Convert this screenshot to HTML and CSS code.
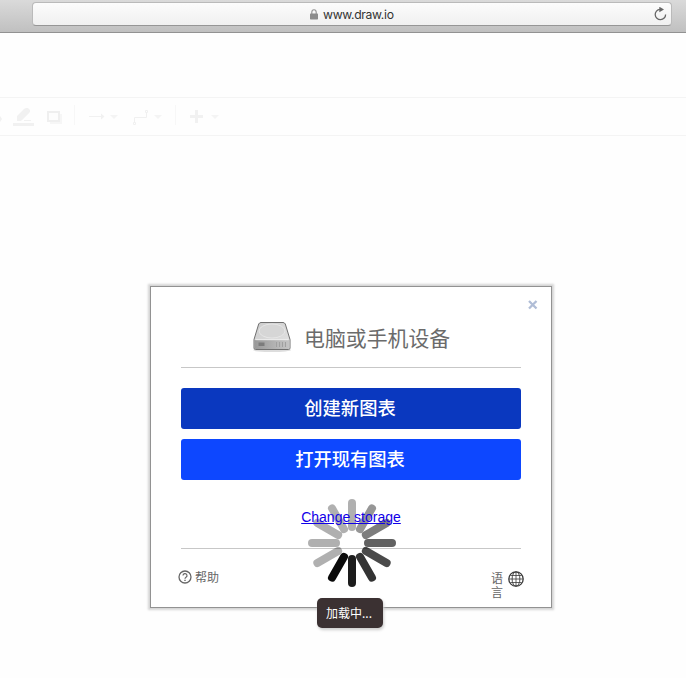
FILE: index.html
```html
<!DOCTYPE html>
<html lang="zh-CN">
<head>
<meta charset="utf-8">
<title>draw.io</title>
<link rel="stylesheet" href="styles.css">
</head>
<body>
<header class="browser">
  <div class="address">
    <span class="site"><svg class="lock" width="8" height="11" viewBox="0 0 8 11"><path d="M1.8 5V3.2a2.2 2.5 0 0 1 4.4 0V5" fill="none" stroke="#929292" stroke-width="1.1"/><rect y="4.6" width="8" height="5.8" rx=".7" fill="#8b8b8b"/></svg><span class="url">www.draw.io</span></span>
    <svg class="reload" width="14" height="14" viewBox="0 0 14 14"><path d="M7 2.300A5.200 5.200 0 1 0 12.600 7.400" fill="none" stroke="#666" stroke-width="1.300"/><path d="M6.300-.3l4.700 2.800-4.700 2.800z" fill="#666"/></svg>
  </div>
</header>
<nav class="toolbar">
  <svg width="230" height="37" viewBox="0 98 230 37">
    <g fill="#f1f1f1">
      <path d="M0 116l2 3-2 3zM17 120v-4l7-7 2-1h2l2 2v2l-9 9h-4zM13 123h21v3H13zM24 120h7v1h-7z"/>
      <path d="M50 114h12v10H50z" fill="#f6f6f6"/>
      <path d="M48 112h11v9H48z" fill="#fdfdfd" stroke="#efefef" stroke-width="2"/>
      <path d="M89 116h12v-2.500l3.500 3-3.500 3V117H89zM195 110h3v5h5v3h-5v5h-3v-5h-5v-3h5z"/>
      <path d="M110 115h8l-4 4zM154 115h8l-4 4zM211 115h8l-4 4z" fill="#f4f4f4"/>
      <path d="M74 105h1v20h-1zM175 105h1v20h-1z" fill="#f7f7f7"/>
    </g>
    <path d="M134.500 122v-4.500h12V113M133.500 122.500h2v2h-2zM145.500 110.500h2v2h-2z" fill="none" stroke="#f0f0f0"/>
  </svg>
</nav>
<main class="stage">
  <section class="dialog">
    <div class="close-row"><svg width="10" height="10" viewBox="0 0 10 10"><path d="M1 1l7.500 7.500M8.500 1L1 8.500" stroke="#b0bdd6" stroke-width="2.300"/></svg></div>
    <div class="title">
      <svg class="drive" width="40" height="32" viewBox="0 0 40 32">
        <defs><linearGradient id="top" x2="1" y2="1"><stop stop-color="#ccc"/><stop offset="1" stop-color="#e3e3e3"/></linearGradient><linearGradient id="front" x2="1"><stop stop-color="#999"/><stop offset="1" stop-color="#c5c5c5"/></linearGradient></defs>
        <ellipse cx="20" cy="29" rx="19" ry="2" fill="#ddd"/>
        <path d="M9 1.500h22q1.500 0 2.300 1.500l4.700 15.500v8.500q0 1.500-1.500 1.500h-33Q2 28.500 2 27v-8.500L6.700 3q.8-1.500 2.300-1.500z" fill="url(#top)" stroke="#707070"/>
        <path d="M2.500 19h35v8q0 1-1 1h-33q-1 0-1-1z" fill="url(#front)"/>
        <path d="M3.500 18.700h33" stroke="#eee"/>
        <ellipse cx="20" cy="10" rx="13" ry="7" fill="#d6d6d6" stroke="#e6e6e6"/>
        <path d="M6.500 21.500h6v3.500h-6z" fill="#7c7c7c"/><path d="M24.500 21v5M27.500 21v5M30.500 21v5M33.500 21v5" stroke="#a0a0a0"/>
      </svg>
      <span>电脑或手机设备</span>
    </div>
    <button class="btn create">创建新图表</button>
    <button class="btn open">打开现有图表</button>
    <a class="storage" href="#">Change storage</a>
    <footer class="footer">
      <div class="help"><svg width="14" height="14" viewBox="0 0 14 14"><circle cx="7" cy="7" r="6" fill="none" stroke="#666" stroke-width="1.300"/><path d="M5 5.600a2 2 0 1 1 3 1.700Q7 7.900 7 8.800" fill="none" stroke="#666" stroke-width="1.200"/><path d="M6.300 9.800h1.400v1.300H6.300z" fill="#666"/></svg><span>帮助</span></div>
      <div class="language"><span>语言</span><svg width="16" height="16" viewBox="0 0 16 16" fill="none" stroke="#3b3b3b"><circle cx="8" cy="8" r="7.200" stroke-width="1.300"/><path d="M8 1v14M1 8h14M2.300 4.500h11.400M2.300 11.500h11.400" stroke-width=".8"/><ellipse cx="8" cy="8" rx="3.900" ry="7.200" stroke-width=".9"/></svg></div>
    </footer>
    <svg class="spinner" width="88" height="88" viewBox="-44 -44 88 88">
      <defs><rect id="spoke" x="-4" y="-44" width="8" height="32" rx="4"/></defs>
      <use href="#spoke" opacity=".31"/>
      <use href="#spoke" transform="rotate(30)" opacity=".41"/>
      <use href="#spoke" transform="rotate(60)" opacity=".51"/>
      <use href="#spoke" transform="rotate(90)" opacity=".62"/>
      <use href="#spoke" transform="rotate(120)" opacity=".71"/>
      <use href="#spoke" transform="rotate(150)" opacity=".8"/>
      <use href="#spoke" transform="rotate(180)" opacity=".89"/>
      <use href="#spoke" transform="rotate(210)" opacity=".96"/>
      <use href="#spoke" transform="rotate(240)" opacity=".31"/>
      <use href="#spoke" transform="rotate(270)" opacity=".31"/>
      <use href="#spoke" transform="rotate(300)" opacity=".31"/>
      <use href="#spoke" transform="rotate(330)" opacity=".31"/>
    </svg>
    <div class="loading">加载中...</div>
  </section>
</main>
</body>
</html>
```
FILE: styles.css
```css
* { box-sizing: border-box; }
body {
  margin: 0;
  height: 678px;
  background: #fefefe;
  font-family: "Liberation Sans", "Noto Sans CJK SC", sans-serif;
  overflow: hidden;
}
svg { display: block; flex: none; }
.browser {
  height: 33px;
  padding: 2px 14px 0 32px;
  background: linear-gradient(#dadada, #c0c0c0);
  border-bottom: 1px solid #929292;
}
.address {
  height: 24px;
  display: flex;
  align-items: center;
  padding-right: 4px;
  border: 1px solid #bababa;
  border-bottom-color: #969696;
  border-radius: 4px;
  background: linear-gradient(#fcfcfc, #f0f0f0);
}
.site {
  flex: 1;
  display: flex;
  align-items: center;
  padding-left: 277px;
  gap: 5px;
}
.url {
  padding-top: 2px;
  font: 12.2px/20px Inter, sans-serif;
  letter-spacing: -.33px;
  color: #333;
}
.toolbar {
  margin-top: 64px;
  height: 39px;
  border: solid #f4f4f4;
  border-width: 1px 0;
}
.stage { padding: 150px 0 0 150px; }
.dialog {
  position: relative;
  width: 402px;
  height: 322px;
  padding: 0 30px;
  display: flex;
  flex-direction: column;
  background: #fff;
  border: 1px solid #929292;
  box-shadow: 0 0 2px 2px #d5d5d5;
}
.close-row {
  height: 33px;
  display: flex;
  justify-content: flex-end;
  padding-top: 13px;
  margin-right: -17px;
}
.title {
  height: 48px;
  display: flex;
  align-items: flex-start;
  padding-left: 71px;
  gap: 12px;
  border-bottom: 1px solid #c7c7c7;
  color: #6b6b6b;
  font-size: 20.9px;
  line-height: 38px;
  white-space: nowrap;
}
.drive { margin-top: 1px; }
.btn {
  height: 41px;
  margin: 20px 0 0;
  padding: 0 2px 2px 0;
  border: 0;
  border-radius: 3px;
  color: #fff;
  font: 500 18.3px/39px "Noto Sans CJK SC", sans-serif;
}
.create { background: #0a38bf; }
.open { margin-top: 10px; background: #0d47ff; }
.storage {
  align-self: center;
  margin-top: 28px;
  color: #1100e8;
  font-size: 14px;
  line-height: 18px;
  position: relative;
  z-index: 1;
}
.footer {
  margin: 22px -3px 0;
  padding-top: 22px;
  display: flex;
  justify-content: space-between;
  color: #666;
  font-size: 12px;
  line-height: 14px;
  position: relative;
}
.footer::before {
  content: "";
  position: absolute;
  top: 0;
  left: 3px;
  right: 3px;
  height: 1px;
  background: #c7c7c7;
}
.help { display: flex; align-items: flex-start; gap: 3px; }
.help span { padding-top: 1px; }
.language { display: flex; gap: 4px; padding-top: 1px; }
.language span { width: 13px; padding-top: 1px; }
.spinner { position: absolute; left: 157px; top: 212px; }
.loading {
  position: absolute;
  left: 166px;
  top: 311px;
  width: 66px;
  height: 30px;
  padding-left: 9px;
  border-radius: 5px;
  background: #3b3132;
  color: #fff;
  box-shadow: 1px 2px 3px #ccc;
  font: 12px/30px "Noto Sans CJK SC", sans-serif;
  white-space: nowrap;
}
```
